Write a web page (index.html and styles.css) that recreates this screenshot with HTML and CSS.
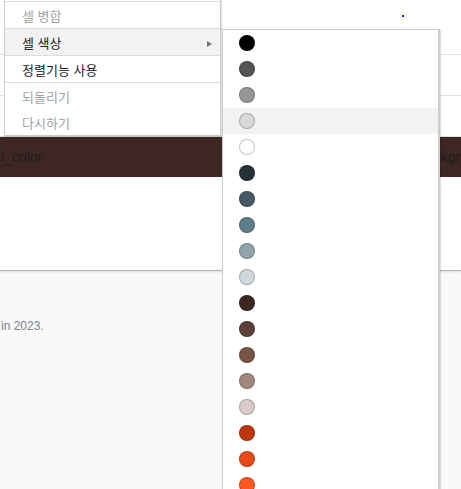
FILE: index.html
```html
<!DOCTYPE html>
<html lang="ko">
  <head>
    <meta charset="UTF-8" />
    <meta name="viewport" content="width=device-width, initial-scale=1.0" />
    <title>셀 색상</title>
    <link rel="stylesheet" href="styles.css">
  </head>
  <body>
    <div class="page">
      <div class="sheet">
        <div class="row row-first"><span class="cursor-dot"></span></div>
        <div class="row"></div>
        <div class="row"></div>
        <div class="row row-colored">
          <div class="cell cell-wide">l_color</div>
          <div class="cell">kgr</div>
        </div>
        <div class="row-blank"></div>
      </div>
      <div class="footer">
        <p class="note">in 2023.</p>
      </div>

      <ul class="menu context-menu">
        <li class="menu-item"></li>
        <li class="menu-item sep disabled">셀 병합</li>
        <li class="menu-item sep active has-sub">셀 색상<span class="arrow"></span></li>
        <li class="menu-item sep">정렬기능 사용</li>
        <li class="menu-item sep disabled">되돌리기</li>
        <li class="menu-item disabled">다시하기</li>
      </ul>

      <ul class="menu color-menu">
        <li class="swatch-item"><span class="swatch" style="background:#000000"></span></li>
        <li class="swatch-item"><span class="swatch" style="background:#555555"></span></li>
        <li class="swatch-item"><span class="swatch" style="background:#969696"></span></li>
        <li class="swatch-item active"><span class="swatch" style="background:#d9d9d9"></span></li>
        <li class="swatch-item"><span class="swatch" style="background:#ffffff"></span></li>
        <li class="swatch-item"><span class="swatch" style="background:#263238"></span></li>
        <li class="swatch-item"><span class="swatch" style="background:#455a64"></span></li>
        <li class="swatch-item"><span class="swatch" style="background:#607d8b"></span></li>
        <li class="swatch-item"><span class="swatch" style="background:#90a4ae"></span></li>
        <li class="swatch-item"><span class="swatch" style="background:#cfd8dc"></span></li>
        <li class="swatch-item"><span class="swatch" style="background:#3e2723"></span></li>
        <li class="swatch-item"><span class="swatch" style="background:#5d4037"></span></li>
        <li class="swatch-item"><span class="swatch" style="background:#795548"></span></li>
        <li class="swatch-item"><span class="swatch" style="background:#a1887f"></span></li>
        <li class="swatch-item"><span class="swatch" style="background:#d7ccc8"></span></li>
        <li class="swatch-item"><span class="swatch" style="background:#bf360c"></span></li>
        <li class="swatch-item"><span class="swatch" style="background:#e64a19"></span></li>
        <li class="swatch-item"><span class="swatch" style="background:#ff5722"></span></li>
      </ul>
    </div>
  </body>
</html>
```

FILE: styles.css
```css
html,
body {
  margin: 0;
  height: 489px;
  overflow: hidden;
}
body {
  font-family: "Liberation Sans", "Noto Sans CJK KR", sans-serif;
  background: #f9f9f9;
}
.page {
  position: relative;
  height: 489px;
}
.sheet {
  background: #fff;
  border-bottom: 1px solid #b4b4b4;
  box-shadow: 0 1px 2px rgba(0, 0, 0, 0.12);
}
.row {
  box-sizing: border-box;
  height: 41px;
  border-bottom: 1px solid #e0e0e0;
}
.row-first {
  height: 55px;
  padding: 15px 0 0 402px;
}
.cursor-dot {
  display: block;
  width: 2px;
  height: 2px;
  background: #1a1aff;
}
.row-colored {
  display: flex;
  height: 40px;
  border-bottom: none;
  background: #3e2723;
  color: #1c1c1c;
  font-size: 14px;
  line-height: 40px;
  overflow: hidden;
  white-space: nowrap;
}
.cell {
  padding-left: 1px;
}
.cell-wide {
  width: 439px;
  flex: none;
}
.row-blank {
  height: 93px;
}
.footer {
  padding: 48px 0 0 1px;
}
.note {
  margin: 0;
  font-size: 12px;
  line-height: 15px;
  color: #7d838a;
}

/* context menus */
.menu {
  position: absolute;
  margin: 0;
  padding: 0;
  list-style: none;
  background: #fff;
  border: 1px solid #cccccc;
  box-shadow: 1px 1px 1px rgba(0, 0, 0, 0.12);
  font-family: "Noto Sans CJK KR", "Liberation Sans", sans-serif;
}
.context-menu {
  top: -26px;
  left: 4px;
  width: 215px;
}
.menu-item {
  position: relative;
  height: 26px;
  padding: 1px 0 0 17px;
  box-sizing: border-box;
  font-size: 13px;
  line-height: 26px;
  color: #222;
}
.menu-item.sep {
  height: 27px;
  border-top: 1px solid #dddddd;
}
.menu-item.disabled {
  color: #a3a3a3;
}
.menu-item.active,
.swatch-item.active {
  background: #f2f2f2;
}
.arrow {
  position: absolute;
  right: 8px;
  top: 12px;
  border-left: 5px solid #6f7580;
  border-top: 3.5px solid transparent;
  border-bottom: 3.5px solid transparent;
}
.color-menu {
  top: 29px;
  left: 222px;
  width: 215px;
  border-right-width: 2px;
}
.swatch-item {
  height: 26px;
  padding: 5px 0 0 16px;
  box-sizing: border-box;
}
.swatch {
  display: block;
  width: 16px;
  height: 16px;
  box-sizing: border-box;
  border-radius: 50%;
  border: 1px solid rgba(0, 0, 0, 0.22);
}
```
